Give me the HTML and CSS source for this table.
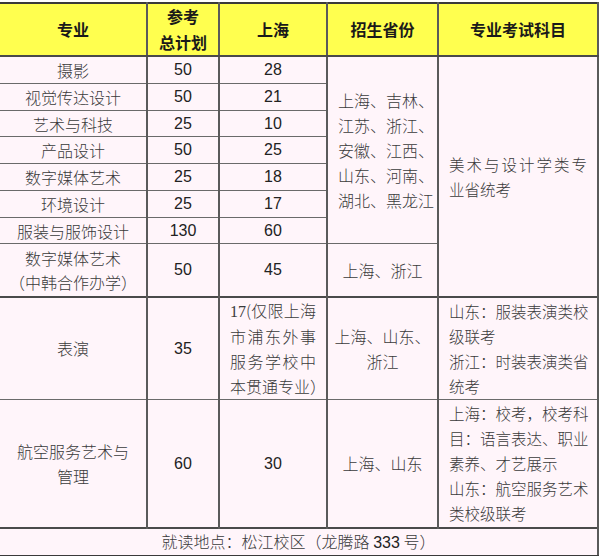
FILE: index.html
```html
<!DOCTYPE html>
<html lang="zh">
<head>
<meta charset="utf-8">
<link rel="stylesheet" href="styles.css">
</head>
<body>
<table class="plan">
  <colgroup>
    <col class="c1"><col class="c2"><col class="c3"><col class="c4"><col class="c5">
  </colgroup>
  <tr class="head">
    <th>专业</th>
    <th>参考<br>总计划</th>
    <th>上海</th>
    <th>招生省份</th>
    <th>专业考试科目</th>
  </tr>
  <tr class="r26">
    <td>摄影</td><td class="num">50</td><td class="num">28</td>
    <td rowspan="7" class="prov">上海、吉林、<br>江苏、浙江、<br>安徽、江西、<br>山东、河南、<br>湖北、黑龙江</td>
    <td rowspan="8" class="exam"><span class="jl">美术与设计学类专</span><span class="ll">业省统考</span></td>
  </tr>
  <tr class="r26"><td>视觉传达设计</td><td class="num">50</td><td class="num">21</td></tr>
  <tr class="r25"><td>艺术与科技</td><td class="num">25</td><td class="num">10</td></tr>
  <tr class="r26"><td>产品设计</td><td class="num">50</td><td class="num">25</td></tr>
  <tr class="r26"><td>数字媒体艺术</td><td class="num">25</td><td class="num">18</td></tr>
  <tr class="r26"><td>环境设计</td><td class="num">25</td><td class="num">17</td></tr>
  <tr class="r25"><td>服装与服饰设计</td><td class="num">130</td><td class="num">60</td></tr>
  <tr class="r54">
    <td>数字媒体艺术<br>（中韩合作办学）</td><td class="num">50</td><td class="num">45</td>
    <td>上海、浙江</td>
  </tr>
  <tr class="r102">
    <td>表演</td><td class="num">35</td>
    <td class="note"><span class="jl"><span class="ser">17</span>(仅限上海</span><span class="jl">市浦东外事</span><span class="jl">服务学校中</span><span class="jl">本贯通专业）</span></td>
    <td>上海、山东、<br>浙江</td>
    <td class="exam"><span class="jl">山东：服装表演类校</span><span class="ll">级联考</span><span class="jl">浙江：时装表演类省</span><span class="ll">统考</span></td>
  </tr>
  <tr class="r129">
    <td>航空服务艺术与<br>管理</td><td class="num">60</td><td class="num">30</td>
    <td>上海、山东</td>
    <td class="exam"><span class="jl">上海：校考，校考科</span><span class="jl">目：语言表达、职业</span><span class="ll">素养、才艺展示</span><span class="jl">山东：航空服务艺术</span><span class="ll">类校级联考</span></td>
  </tr>
  <tr class="foot">
    <td colspan="5">就读地点：松江校区（龙腾路 <span class="num">333</span> 号）</td>
  </tr>
</table>
</body>
</html>
```

FILE: styles.css
```css
html, body {
  margin: 0;
  padding: 0;
  background: #ffffff;
}

body {
  padding-top: 2px;
}

.plan {
  border-collapse: collapse;
  table-layout: fixed;
  width: 598px;
  background: #fff5fa;
  font-family: "Noto Sans CJK SC", sans-serif;
  font-weight: 300;
  font-size: 16px;
  line-height: 24px;
  color: #3a3a3a;
}

.c1 { width: 147px; }
.c2 { width: 72px; }
.c3 { width: 108px; }
.c4 { width: 111px; }
.c5 { width: 160px; }

.plan th,
.plan td {
  padding: 0;
  text-align: center;
  vertical-align: middle;
  border-left: 2px solid #5a5a5a;
  border-right: 2px solid #5a5a5a;
  border-top: 1px solid #6a6a6a;
  border-bottom: 1px solid #6a6a6a;
}

.plan tr > :first-child {
  border-left: none;
}

.head th {
  background: #ffff4f;
  color: #1a1a1a;
  font-weight: 700;
  height: 50px;
  line-height: 25.5px;
  border-top: 2px solid #3a3a3a;
  border-bottom: 2px solid #4a4a4a;
}

.r25 td { height: 25px; }
.r26 td { height: 26px; }
.r54 td { height: 52px; }
.r102 td { height: 100px; line-height: 25px; border-top: 2px solid #4a4a4a; }
.r129 td { height: 127px; line-height: 25px; }

.num {
  font-family: "Liberation Sans", Arial, sans-serif;
  font-weight: 400;
  color: #222222;
}

.ser {
  font-family: "Liberation Serif", serif;
}

.plan td.prov {
  text-align: left;
  padding-left: 10px;
  line-height: 25px;
}

.plan td.exam {
  text-align: left;
  padding: 0 10px 0 10px;
  font-size: 15.5px;
  line-height: 25px;
}

.plan td.note {
  padding: 0 10px;
}

.jl {
  display: block;
  white-space: nowrap;
  text-align: justify;
  text-align-last: justify;
}

.ll {
  display: block;
  white-space: nowrap;
  text-align: left;
}

.foot td {
  height: 25px;
  border-top: 2px solid #4a4a4a;
  border-bottom: 2px solid #3a3a3a;
}
```
